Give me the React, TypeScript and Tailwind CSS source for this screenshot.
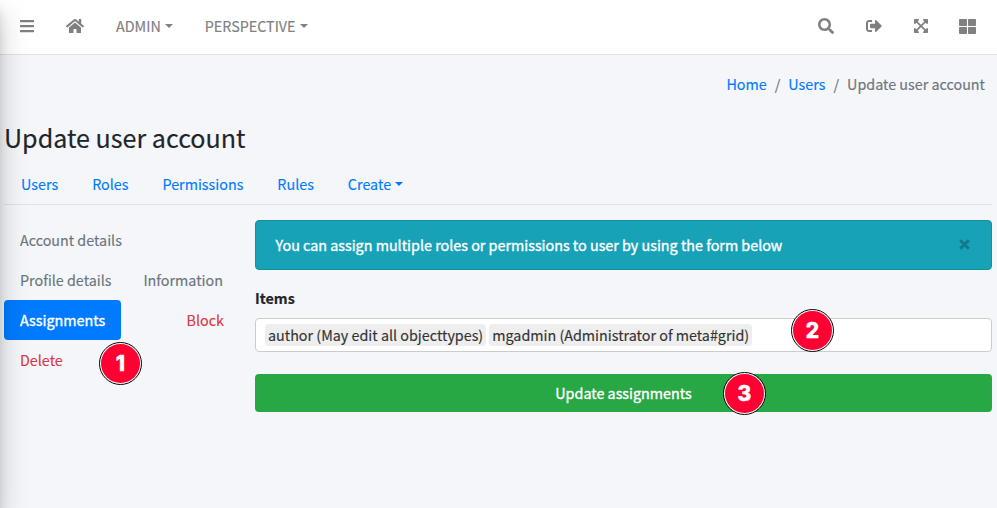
import type { ReactNode } from "react";
import { FaBars, FaHome, FaSearch, FaSignOutAlt, FaExpandArrowsAlt, FaThLarge } from "react-icons/fa";

function Caret() {
  return (
    <span className="ml-1 inline-block border-x-[4px] border-t-[4px] border-x-transparent border-t-current" />
  );
}

function Marker({ place, children }: { place: string; children: ReactNode }) {
  return (
    <span
      className={`absolute z-20 flex size-[43px] items-center justify-center rounded-full border-[1.5px] border-black bg-white p-px ${place}`}
    >
      <span className="flex size-full items-center justify-center rounded-full bg-[#ff0033] font-['Inter',sans-serif] text-[21px] leading-none font-extrabold text-white [-webkit-text-stroke:0.4px_white]">
        {children}
      </span>
    </span>
  );
}

export default function App() {
  return (
    <div className="relative h-[508px] w-[997px] overflow-hidden bg-[#f4f6f9] font-['Noto_Sans_CJK_SC',sans-serif] text-[14.33px] leading-6 text-[#212529] [-webkit-text-stroke:0.15px]">
      <div className="absolute inset-y-0 -left-[250px] z-30 w-[249px] shadow-[0_14px_28px_rgba(0,0,0,0.22),0_10px_10px_rgba(0,0,0,0.12)]" />

      <header className="flex h-[55px] items-center justify-between border-b border-[#dee2e6] bg-white pr-5 pb-0.5 pl-[19px] text-[#808080]">
        <nav className="flex items-center">
          <FaBars className="mr-[31px] size-4" />
          <FaHome className="mr-8 size-[18px]" />
          <a className="mr-8 flex items-center">
            ADMIN
            <Caret />
          </a>
          <a className="flex items-center">
            PERSPECTIVE
            <Caret />
          </a>
        </nav>
        <div className="flex items-center">
          <FaSearch className="mr-8 size-4" />
          <FaSignOutAlt className="mr-[31px] size-4" />
          <FaExpandArrowsAlt className="mr-[30px] size-4" />
          <FaThLarge className="mr-px size-[17px]" />
        </div>
      </header>

      <ol className="flex h-[60px] items-center justify-end gap-2 pr-3 pb-0.5 text-[#6c757d]">
        <li className="text-[#007bff]">Home</li>
        <li>/</li>
        <li className="text-[#007bff]">Users</li>
        <li>/</li>
        <li>Update user account</li>
      </ol>

      <main className="pr-[5px] pl-1">
        <h3 className="h-[49px] pt-[5px] text-[25.1px] leading-[34px]">Update user account</h3>
        <nav className="flex h-[41px] gap-[34px] border-b border-[#dee2e6] pt-2 pl-[17px] text-[#007bff]">
          <a>Users</a>
          <a>Roles</a>
          <a>Permissions</a>
          <a>Rules</a>
          <a className="flex h-6 items-center">
            Create
            <Caret />
          </a>
        </nav>

        <div className="flex gap-4 pt-[15px]">
          <aside className="relative w-[235px] text-[#6c757d]">
            <div className="flex h-10 items-center px-4">Account details</div>
            <div className="flex h-10 items-center justify-between px-4">
              <span>Profile details</span>
              <span>Information</span>
            </div>
            <div className="flex h-10 items-center justify-between pr-[15px]">
              <span className="flex h-10 w-[117px] items-center rounded bg-[#007bff] px-4 text-white [-webkit-text-stroke:0.35px]">
                Assignments
              </span>
              <span className="text-[#dc3545]">Block</span>
            </div>
            <div className="flex h-10 items-center px-4 text-[#dc3545]">Delete</div>
            <Marker place="left-[95px] top-[122px]">1</Marker>
          </aside>

          <section className="relative w-[737px]">
            <div className="flex h-[50px] items-center justify-between rounded border border-[#148ea1] bg-[#17a2b8] pr-[21px] pl-[19.5px] text-white [-webkit-text-stroke:0.35px]">
              <span>You can assign multiple roles or permissions to user by using the form below</span>
              <svg className="mb-0.5 size-[11px] text-black/25" viewBox="0 0 11 11" fill="none" stroke="currentColor" strokeWidth="3">
                <path d="M1.2 1.2 9.8 9.8M9.8 1.2 1.2 9.8" />
              </svg>
            </div>
            <div className="mt-4 h-6 font-bold">Items</div>
            <div className="mt-2 flex h-[34px] items-center gap-[3px] rounded border border-[#cccccc] bg-white pl-[9px] text-[#333333]">
              <span className="h-[22px] rounded bg-[#eeeeee] px-[3px] leading-[22px]">
                author (May edit all objecttypes)
              </span>
              <span className="h-[22px] rounded bg-[#eeeeee] px-[3px] leading-[22px]">
                mgadmin (Administrator of meta#grid)
              </span>
            </div>
            <button className="mt-[22px] flex h-[38px] w-full items-center justify-center rounded bg-[#28a745] text-white [-webkit-text-stroke:0.35px]">
              Update assignments
            </button>
            <Marker place="left-[536px] top-[89px]">2</Marker>
            <Marker place="left-[468px] top-[152px]">3</Marker>
          </section>
        </div>
      </main>
    </div>
  );
}
